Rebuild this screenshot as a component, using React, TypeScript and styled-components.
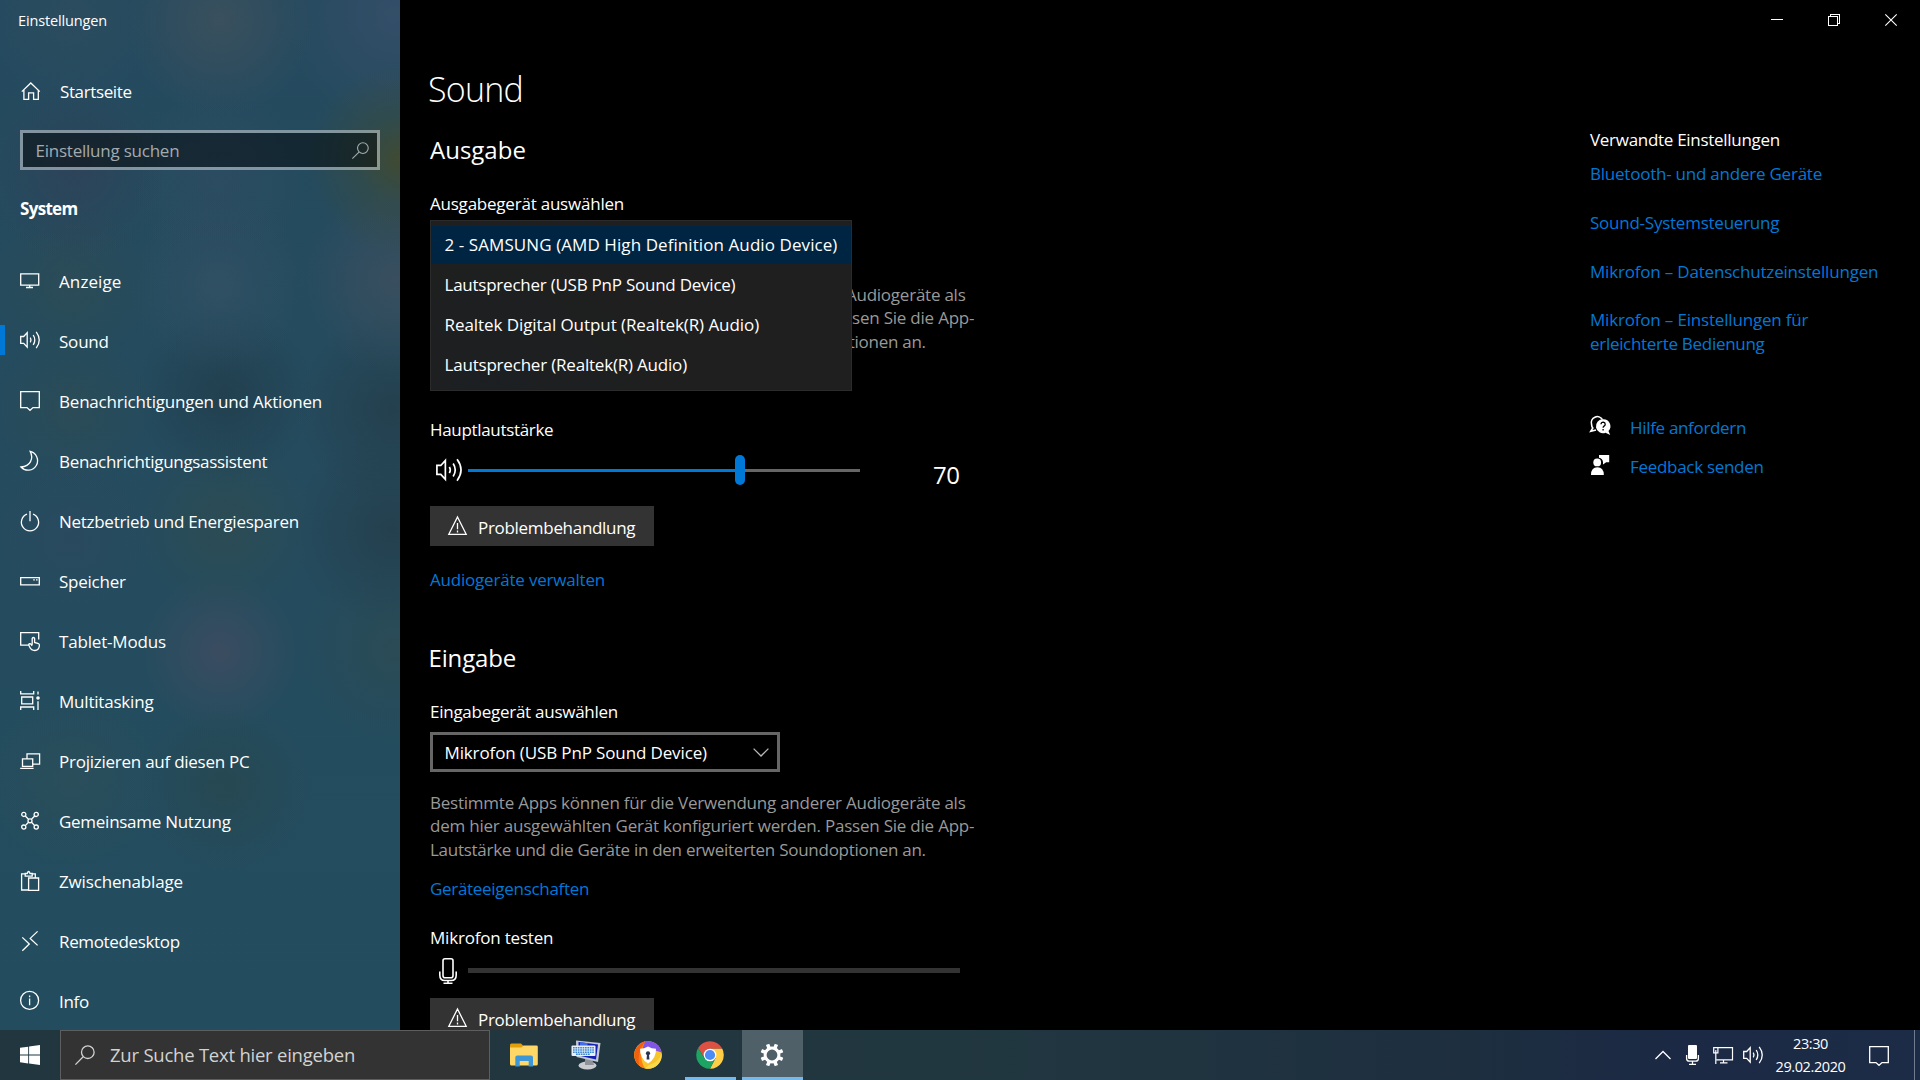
import React from "react";
import styled, { createGlobalStyle } from "styled-components";

const Global = createGlobalStyle`
  *, *::before, *::after { box-sizing: border-box; }
  body { margin: 0; background: #000; overflow: hidden; font-family: "Open Sans", "Noto Sans", sans-serif; color: #fff; }
  svg { display: block; flex: none; overflow: visible; }
`;

/* ---------- shell ---------- */

const Desktop = styled.div`
  width: 1920px;
  height: 1080px;
  display: grid;
  grid-template-rows: 1030px 50px;
  overflow: hidden;
`;

const Window = styled.div`
  display: grid;
  grid-template-columns: 400px 1fr;
  overflow: hidden;
  background: #000;
`;

const Label = styled.span<{ $track?: number }>`
  display: block;
  height: 24px;
  padding-top: 1px;
  font-size: 17px;
  line-height: 24px;
  letter-spacing: ${(p) => p.$track ?? -0.2}px;
  white-space: nowrap;
`;

/* ---------- sidebar ---------- */

const Sidebar = styled.aside`
  display: flex;
  flex-direction: column;
  background:
    radial-gradient(circle 95px at 400px 160px, rgba(74, 74, 36, 0.75), rgba(74, 74, 36, 0.3) 45%, transparent),
    radial-gradient(circle 95px at 220px 20px, rgba(72, 84, 92, 0.6), transparent),
    radial-gradient(circle 110px at 395px 15px, rgba(58, 80, 108, 0.7), transparent),
    radial-gradient(circle 90px at 75px 170px, rgba(52, 62, 84, 0.55), transparent),
    radial-gradient(circle 90px at 218px 180px, rgba(50, 78, 98, 0.55), transparent),
    radial-gradient(circle 85px at 72px 20px, rgba(50, 78, 94, 0.5), transparent),
    radial-gradient(circle 85px at 70px 285px, rgba(50, 76, 78, 0.5), transparent),
    radial-gradient(circle 90px at 218px 285px, rgba(56, 82, 102, 0.6), transparent),
    radial-gradient(circle 95px at 395px 280px, rgba(66, 80, 94, 0.7), transparent),
    radial-gradient(circle 80px at 72px 410px, rgba(52, 76, 78, 0.45), transparent),
    radial-gradient(circle 90px at 225px 395px, rgba(33, 60, 74, 0.75), transparent),
    radial-gradient(circle 95px at 392px 410px, rgba(36, 60, 72, 0.75), transparent),
    radial-gradient(circle 90px at 225px 525px, rgba(50, 76, 76, 0.6), transparent),
    radial-gradient(circle 100px at 392px 530px, rgba(36, 60, 72, 0.75), transparent),
    radial-gradient(circle 85px at 72px 540px, rgba(48, 72, 94, 0.45), transparent),
    radial-gradient(circle 80px at 220px 652px, rgba(72, 76, 98, 0.65), transparent),
    radial-gradient(circle 95px at 395px 650px, rgba(48, 74, 80, 0.6), transparent),
    radial-gradient(circle 85px at 72px 780px, rgba(50, 80, 86, 0.5), transparent),
    radial-gradient(circle 85px at 225px 785px, rgba(40, 70, 76, 0.7), transparent),
    linear-gradient(#254a5f, #244c5e 60%, #234d5e);
`;

const WindowTitle = styled.div`
  height: 40px;
  padding: 9px 0 0 18px;
  font-size: 14.5px;
  line-height: 24px;
  letter-spacing: -0.15px;
`;

const HomeLink = styled.div`
  display: flex;
  align-items: center;
  gap: 18px;
  height: 60px;
  margin-top: 21px;
  padding: 0 0 0 20px;
`;

const SearchField = styled.div`
  display: flex;
  align-items: center;
  justify-content: space-between;
  width: 360px;
  height: 40px;
  margin: 9px 0 0 20px;
  padding: 1px 8px 0 12.5px;
  border: 3px solid rgba(255, 255, 255, 0.42);
  background: rgba(0, 0, 0, 0.46);
  background-clip: padding-box;
  color: #a3abaf;
  ${Label} { padding-top: 0; }
`;

const GroupTitle = styled.h2`
  margin: 27px 0 0 20px;
  font-size: 17px;
  line-height: 24px;
  font-weight: 700;
  letter-spacing: -0.7px;
`;

const NavList = styled.nav`
  margin-top: auto;
`;

const NavItem = styled.div<{ $active?: boolean }>`
  display: flex;
  align-items: center;
  gap: 19px;
  height: 60px;
  padding-left: 15px;
  border-left: 5px solid transparent;
  border-image: linear-gradient(
      transparent 15px,
      ${(p) => (p.$active ? "#0078d7" : "transparent")} 15px,
      ${(p) => (p.$active ? "#0078d7" : "transparent")} 45px,
      transparent 45px
    )
    0 0 0 1;
  ${Label} { padding-top: 1.5px; }
`;

const Glyph = styled.svg.attrs({ fill: "none", stroke: "currentColor", strokeWidth: 1.3 })``;

/* ---------- main pane ---------- */

const Main = styled.main`
  display: grid;
  grid-template-rows: 40px 990px;
  min-width: 0;
`;

const Caption = styled.div`
  display: flex;
  justify-content: flex-end;
  padding-right: 1px;
`;

const CaptionButton = styled.div`
  display: flex;
  align-items: center;
  justify-content: center;
  width: 57px;
  height: 40px;
`;

const Body = styled.div`
  display: grid;
  grid-template-columns: 1190px 1fr;
`;

const Content = styled.section`
  padding: 27px 0 0 30px;
  width: 620px;
`;

const PageTitle = styled.h1`
  margin: 0 0 0 -2px;
  font-size: 34px;
  line-height: 44px;
  font-weight: 350;
  letter-spacing: -0.8px;
`;

const SectionTitle = styled.h2<{ $gap: number; $track?: number; $shift?: number }>`
  margin: ${(p) => p.$gap}px 0 25px ${(p) => p.$shift ?? 0}px;
  font-size: 24px;
  line-height: 32px;
  font-weight: 400;
  letter-spacing: ${(p) => p.$track ?? 0}px;
`;

const SelectWrap = styled.div`
  position: relative;
  margin-top: 5px;
  height: 40px;
`;

const SelectBox = styled.div`
  display: flex;
  align-items: center;
  justify-content: space-between;
  width: 350px;
  height: 40px;
  margin-top: 9px;
  padding: 1px 8px 0 11.5px;
  border: 3px solid #666;
  ${Label} { padding-top: 0; }
`;

const Popup = styled.ul`
  position: absolute;
  z-index: 2;
  left: 0;
  top: 0;
  width: 422px;
  height: 171px;
  margin: 0;
  padding: 5px 0 0;
  list-style: none;
  border: 1px solid #2b2b2b;
  background: radial-gradient(circle 160px at 60px 190px, #1c1f23, #1f1f1f);
`;

const Option = styled.li<{ $selected?: boolean }>`
  height: 40px;
  padding: 6px 0 0 13.5px;
  background: ${(p) => (p.$selected ? "linear-gradient(#002542, #002542) 0 0 / 100% 38px no-repeat" : "none")};
`;

const Hint = styled.p<{ $gap: number }>`
  margin: ${(p) => p.$gap}px 0 0;
  color: #999;
  ${Label} { height: 23.5px; padding-top: 0; line-height: 23.5px; }
`;

const Field = styled.div<{ $gap: number }>`
  margin-top: ${(p) => p.$gap}px;
`;

const Link = styled.a<{ $gap?: number }>`
  display: block;
  margin-top: ${(p) => p.$gap ?? 0}px;
  color: #0078d7;
`;

const VolumeRow = styled.div`
  display: flex;
  align-items: center;
  height: 40px;
  margin-top: 9px;
  padding-left: 6px;
`;

const Track = styled.div`
  display: flex;
  align-items: center;
  width: 392px;
  margin-left: 6px;
`;

const TrackFill = styled.div`
  width: 267px;
  height: 3px;
  background: #0078d7;
`;

const Thumb = styled.div`
  width: 10px;
  height: 30px;
  border-radius: 5px;
  background: #0078d7;
`;

const TrackRest = styled.div`
  flex: 1;
  height: 3px;
  background: #666;
`;

const VolumeValue = styled.div`
  margin-left: 73px;
  padding-top: 9px;
  font-size: 24px;
  line-height: 32px;
  letter-spacing: -0.4px;
`;

const Button = styled.div<{ $gap: number }>`
  display: flex;
  align-items: center;
  gap: 11px;
  width: 224px;
  height: 40px;
  margin-top: ${(p) => p.$gap}px;
  padding-left: 17px;
  background: #333;
  ${Label} { padding-top: 2px; }
`;

const MicRow = styled.div`
  display: flex;
  align-items: center;
  gap: 10px;
  height: 26px;
  margin-top: 9px;
  padding-left: 8px;
`;

const LevelBar = styled.div`
  width: 492px;
  height: 5px;
  margin-top: -1px;
  background: #333;
`;

const Related = styled.aside`
  padding-top: 87px;
`;

const HelpRow = styled.div<{ $gap: number }>`
  display: flex;
  align-items: center;
  gap: 19px;
  height: 24px;
  margin-top: ${(p) => p.$gap}px;
  color: #0078d7;
  svg { margin-top: -2px; }
`;

/* ---------- taskbar ---------- */

const Taskbar = styled.footer`
  display: flex;
  background: linear-gradient(90deg, #21363f, #21373f 50%, #1e2f3f 75%, #1b2944 87%, #1c2b46);
`;

const StartButton = styled.div`
  display: flex;
  align-items: center;
  justify-content: center;
  width: 60px;
`;

const TaskSearch = styled.div`
  display: flex;
  align-items: center;
  gap: 15px;
  width: 430px;
  padding-left: 14px;
  border: 1px solid #5e5e5e;
  background: #333;
  color: #d2d2d2;
  font-size: 18.5px;
  line-height: 26px;
  letter-spacing: -0.23px;
  white-space: nowrap;
`;

const Apps = styled.div`
  display: flex;
  gap: 1px;
  padding-left: 4px;
`;

const AppTile = styled.div<{ $state?: "open" | "focused" }>`
  display: flex;
  align-items: center;
  justify-content: center;
  width: 61px;
  height: 50px;
  padding-right: 2px;
  background:
    linear-gradient(#76b9ed, #76b9ed) 50% 100% / ${(p) => (p.$state === "focused" ? "100%" : p.$state ? "51px" : "0")} 3px no-repeat,
    ${(p) => (p.$state === "focused" ? "#4f6069" : "transparent")};
`;

const Tray = styled.div`
  display: flex;
  align-items: center;
  margin-left: auto;
`;

const Clock = styled.time`
  display: block;
  width: 90px;
  margin: 0 13.500px 0 2.500px;
  font-size: 14.5px;
  line-height: 23px;
  letter-spacing: -0.4px;
  text-align: center;
`;

const PeekEdge = styled.div`
  width: 6px;
  height: 50px;
  margin-left: 25px;
  border-left: 1px solid #6f7a8c;
`;

/* ---------- icons ---------- */

const Speaker = ({ size = 20, w = 1.3 }: { size?: number; w?: number }) => (
  <Glyph width={size} height={size} viewBox="0 0 20 20" strokeWidth={w}>
    <path d="M.7 6.5h3L7.2 2.6v14.6L3.7 13.4h-3z" />
    <path d="M10.3 7.6q1.4 2.4 0 4.8M13.2 5q3.2 4.9 0 10M16.2 1.8q6.1 8.2 0 16.4" />
  </Glyph>
);

const Magnifier = ({ size }: { size: number }) => (
  <Glyph width={size} height={size} viewBox="0 0 20 20" strokeWidth={20 / size + 0.2}>
    <circle cx="12.8" cy="7.2" r="6.3" />
    <path d="M8.2 11.8.4 19.6" />
  </Glyph>
);

const Warning = () => (
  <Glyph width={20} height={20} viewBox="0 0 20 20">
    <path d="M10.5 1 19.2 18.3H1.800zM10.500 7v6.200M10.500 14.600v1.800" />
  </Glyph>
);

const Notification = () => (
  <Glyph width={20} height={20} viewBox="0 0 20 20">
    <path d="M.7 1.6h18.6v16H13L10 20.3 7 17.6H.7z" />
  </Glyph>
);

const navIcons: Record<string, React.ReactNode> = {
  display: <path d="M.7 3.900h18v11.300H.7zM9.700 15.200v2.300M6 17.500h7" />,
  focus: <path d="M10.200 1.400A9.500 9.500 0 1 1 1 17C10.500 16.500 13.800 8.500 10.200 1.400z" />,
  power: <path d="M7 4.200a8.600 8.600 0 1 0 6 0M10 1v10.300" />,
  storage: <path d="M.7 7.700h18.600v7.200H.7zM13.200 9.900h1.600M16 9.900h1.600" />,
  tablet: (
    <path d="M9 15.2H.7V2.6h18v7M12.2 14.8V8.3q1.2-1.6 2.4 0v4.2l3.8 1q1.2.5 1 2.3-.5 4.6-4.6 4.7-3.6 0-5-3.2l-1.200-2.600q.6-1.400 2-.8l1.600 1.800" />
  ),
  multitask: (
    <>
      <path d="M.7.9v3h13v-3M1.7 7h11v6.800h-11zM.7 20v-3h13v3M18 1.400v3M18 11.200V20" />
      <circle cx="18" cy="8" r="1.800" fill="currentColor" stroke="none" />
    </>
  ),
  project: <path d="M7 8.500V3.800h12.600v10.400h-6.800M2.500 8.800h10.200v7.600H2.500zM.2 18.300h13.400" />,
  share: (
    <>
      <circle cx="3.800" cy="4.400" r="2.100" /><circle cx="16.200" cy="4.400" r="2.100" />
      <circle cx="3.800" cy="17.100" r="2.100" /><circle cx="16.200" cy="17.100" r="2.100" />
      <circle cx="10" cy="10.800" r="2" />
      <path d="m5.300 6 3.200 3.300M14.700 6l-3.200 3.300M5.300 15.600l3.200-3.300M14.700 15.600l-3.200-3.300" />
    </>
  ),
  clipboard: <path d="M8 20H1.600V3.800h3.600M12 3.800h3.300v3.600M5.200 6.200V3.500h2q1.400-4 2.800 0h2.200v2.700zM8.600 8h10v12.300h-10z" />,
  remote: <path d="m17.600 1.400-7.400 7 7.400 7M2.300 7.400l7 6.600-7 6.800" />,
  info: <><circle cx="9.600" cy="10.400" r="9" /><path d="M9.600 8.600v6.600M9.600 5.600v1.600" /></>,
};

const NavIcon = ({ name }: { name: string }) => {
  if (name === "sound") return <Speaker />;
  if (name === "notify") return <Notification />;
  return <Glyph width={20} height={20} viewBox="0 0 20 20">{navIcons[name]}</Glyph>;
};

const nav: { icon: string; text: string; track: number; active?: boolean }[] = [
  { icon: "display", text: "Anzeige", track: 0.1 },
  { icon: "sound", text: "Sound", track: -0.2, active: true },
  { icon: "notify", text: "Benachrichtigungen und Aktionen", track: -0.2 },
  { icon: "focus", text: "Benachrichtigungsassistent", track: -0.32 },
  { icon: "power", text: "Netzbetrieb und Energiesparen", track: -0.28 },
  { icon: "storage", text: "Speicher", track: -0.25 },
  { icon: "tablet", text: "Tablet-Modus", track: -0.18 },
  { icon: "multitask", text: "Multitasking", track: -0.2 },
  { icon: "project", text: "Projizieren auf diesen PC", track: -0.25 },
  { icon: "share", text: "Gemeinsame Nutzung", track: -0.27 },
  { icon: "clipboard", text: "Zwischenablage", track: -0.16 },
  { icon: "remote", text: "Remotedesktop", track: -0.35 },
  { icon: "info", text: "Info", track: -0.28 },
];

const outputs = [
  { text: "2 - SAMSUNG (AMD High Definition Audio Device)", track: 0.08 },
  { text: "Lautsprecher (USB PnP Sound Device)", track: -0.24 },
  { text: "Realtek Digital Output (Realtek(R) Audio)", track: -0.07 },
  { text: "Lautsprecher (Realtek(R) Audio)", track: -0.2 },
];

const DeviceHint = ({ gap }: { gap: number }) => (
  <Hint $gap={gap}>
    <Label $track={-0.235}>Bestimmte Apps können für die Verwendung anderer Audiogeräte als</Label>
    <Label $track={-0.215}>dem hier ausgewählten Gerät konfiguriert werden. Passen Sie die App-</Label>
    <Label $track={-0.27}>Lautstärke und die Geräte in den erweiterten Soundoptionen an.</Label>
  </Hint>
);

const Troubleshoot = ({ gap }: { gap: number }) => (
  <Button $gap={gap}>
    <Warning />
    <Label $track={-0.3}>Problembehandlung</Label>
  </Button>
);

const FolderIcon = () => (
  <svg width="28" height="24" viewBox="0 0 28 24">
    <path d="M0 2q0-1.500 1.500-1.500H11L14 3.500V8H0z" fill="#e19f09" />
    <path d="M0 4.500h11.500l2-2H26.500q1.300 0 1.300 1.300V21q0 1.500-1.500 1.500H1.500Q0 22.500 0 21z" fill="#ffd766" />
    <path d="M5.300 23.500V14.500q0-2 2-2H21q2 0 2 2V23.500H18.700V18H9.700V23.500z" fill="#3d96d6" />
  </svg>
);

const KeyboardPcIcon = () => (
  <svg width="30" height="30" viewBox="0 0 30 30">
    <ellipse cx="16.500" cy="25.500" rx="9" ry="4" fill="#c9cbd0" />
    <path d="M14 19h7l2 6h-9z" fill="#8f9298" />
    <path d="M5 .500 29.500 3 27 22 5.500 17z" fill="#c4c8d2" />
    <path d="M7.500 2 27 4.600 25 19.500 7.500 15.600z" fill="#1420b4" />
    <path d="m9 2.200 8 1-4 12.500-4-.8z" fill="#3f6df0" />
    <rect x=".500" y="5.500" width="24" height="10.500" rx="1" fill="#e6f0fa" />
    <path d="M2 7.700h21M2 10h21M2 12.200h21M5 14.300h14" stroke="#3d86d0" strokeWidth="1.400" strokeDasharray="1.700 .700" />
  </svg>
);

const ShieldBrowserIcon = () => (
  <svg width="28" height="28" viewBox="0 0 28 28">
    <circle cx="14" cy="14" r="13.800" fill="#f7c52a" />
    <path d="M14 14 4.200 4.200A13.800 13.800 0 0 1 27.500 11.500L20 9z" fill="#8156e6" />
    <path d="M11 .6A13.800 13.800 0 0 0 11 27.500Q6 20 8 12 9 5 11 .6z" fill="#ff7d12" />
    <path d="M5 3.700A13.800 13.800 0 0 0 5 24.300Q3 12 11 .6 8 1 5 3.700z" fill="#f2600e" />
    <path d="M27.500 11.500Q26 21 15 24l-4 3.500A13.800 13.800 0 0 0 27.500 11.500z" fill="#fbd84c" />
    <path d="M14 5.500q3.500 2.200 8 2.200.3 9.800-8 14.800-8.300-5-8-14.800 4.500 0 8-2.200z" fill="#fff" />
    <circle cx="14" cy="12.300" r="2.100" fill="#2a3350" />
    <path d="M13 13h2l.4 5.500h-2.800z" fill="#2a3350" />
  </svg>
);

const ChromeIcon = () => (
  <svg width="28" height="28" viewBox="0 0 28 28">
    <path d="M2.050 7.100A13.800 13.800 0 0 1 25.950 7.100L26 7.700H14L8.540 17.150z" fill="#dd5144" />
    <path d="M25.950 7.100A13.800 13.800 0 0 1 14 27.800L19.460 17.150 14 7.700H26.200z" fill="#ffcd46" />
    <path d="M14 27.800A13.800 13.800 0 0 1 2.050 7.100L8.540 17.150 14 20.300 19.460 17.150z" fill="#1da462" />
    <circle cx="14" cy="14" r="6.300" fill="#fff" />
    <circle cx="14" cy="14" r="5.100" fill="#4c8bf5" />
  </svg>
);

const GearIcon = () => (
  <svg width="24" height="24" viewBox="-12 -12 24 24">
    <circle r="6.900" fill="none" stroke="#fff" strokeWidth="3" />
    {[22.5, 67.5, 112.5, 157.5, 202.5, 247.5, 292.5, 337.5].map((a) => (
      <rect key={a} x="-1.800" y="-11.500" width="3.600" height="4.500" rx=".5" fill="#fff" transform={`rotate(${a})`} />
    ))}
  </svg>
);

/* ---------- page ---------- */

export default function App() {
  return (
    <Desktop>
      <Global />
      <Window>
        <Sidebar>
          <WindowTitle>Einstellungen</WindowTitle>
          <HomeLink>
            <Glyph width={22} height={20} viewBox="0 0 22 20">
              <path d="M1.800 10.600 10.800 2l9 8.600M3.900 8.800v9.600h4.700v-6.600h5v6.600h4.700V8.800" />
            </Glyph>
            <Label $track={-0.38}>Startseite</Label>
          </HomeLink>
          <SearchField>
            <Label $track={-0.23}>Einstellung suchen</Label>
            <Magnifier size={17} />
          </SearchField>
          <GroupTitle>System</GroupTitle>
          <NavList>
            {nav.map((n) => (
              <NavItem key={n.text} $active={n.active}>
                <NavIcon name={n.icon} />
                <Label $track={n.track}>{n.text}</Label>
              </NavItem>
            ))}
          </NavList>
        </Sidebar>

        <Main>
          <Caption>
            <CaptionButton>
              <Glyph width={12} height={12} viewBox="0 0 12 12" shapeRendering="crispEdges"><path d="M0 5.500h12" strokeWidth={1} /></Glyph>
            </CaptionButton>
            <CaptionButton>
              <Glyph width={12} height={12} viewBox="0 0 12 12" shapeRendering="crispEdges"><path d="M.5 2.500h9v9h-9zM2.500 2.500v-2h9v9h-2" strokeWidth={1} /></Glyph>
            </CaptionButton>
            <CaptionButton>
              <Glyph width={12} height={12} viewBox="0 0 12 12"><path d="m.3.3 11.400 11.400M11.700.3.3 11.700" strokeWidth={1.100} /></Glyph>
            </CaptionButton>
          </Caption>
          <Body>
            <Content>
              <PageTitle>Sound</PageTitle>
              <SectionTitle $gap={23} $track={0}>Ausgabe</SectionTitle>
              <Label $track={-0.22}>Ausgabegerät auswählen</Label>
              <SelectWrap>
                <Popup>
                  {outputs.map((o, i) => (
                    <Option key={o.text} $selected={i === 0}>
                      <Label $track={o.track}>{o.text}</Label>
                    </Option>
                  ))}
                </Popup>
              </SelectWrap>
              <DeviceHint gap={22.5} />
              <Field $gap={64}>
                <Label $track={-0.32}>Hauptlautstärke</Label>
                <VolumeRow>
                  <Speaker size={26} w={1.1} />
                  <Track>
                    <TrackFill />
                    <Thumb />
                    <TrackRest />
                  </Track>
                  <VolumeValue>70</VolumeValue>
                </VolumeRow>
              </Field>
              <Troubleshoot gap={16} />
              <Link $gap={21}><Label>Audiogeräte verwalten</Label></Link>
              <SectionTitle $gap={51} $track={-0.15} $shift={-1.5}>Eingabe</SectionTitle>
              <Label $track={-0.26}>Eingabegerät auswählen</Label>
              <SelectBox>
                <Label $track={-0.13}>Mikrofon (USB PnP Sound Device)</Label>
                <Glyph width={16} height={9} viewBox="0 0 16 9"><path d="m.6.600 7.400 7.400L15.400.600" stroke="#b8b8b8" /></Glyph>
              </SelectBox>
              <DeviceHint gap={18.5} />
              <Link $gap={15}><Label $track={-0.3}>Geräteeigenschaften</Label></Link>
              <Field $gap={25}>
                <Label $track={-0.2}>Mikrofon testen</Label>
                <MicRow>
                  <Glyph width={20} height={26} viewBox="0 0 20 26">
                    <rect x="5" y=".8" width="10" height="19" rx="2" strokeWidth="1.600" />
                    <path d="M1.800 13.500v3.500q0 5.500 5 5.500h6.400q5 0 5-5.500v-3.500M10 22.500v2.500M5.500 25.200h9" strokeWidth="1.600" />
                  </Glyph>
                  <LevelBar />
                </MicRow>
              </Field>
              <Troubleshoot gap={14} />
            </Content>

            <Related>
              <Label $track={-0.29}>Verwandte Einstellungen</Label>
              <Link $gap={9.5}><Label $track={-0.23}>Bluetooth- und andere Geräte</Label></Link>
              <Link $gap={25.5}><Label $track={-0.24}>Sound-Systemsteuerung</Label></Link>
              <Link $gap={25}><Label $track={-0.19}>Mikrofon – Datenschutzeinstellungen</Label></Link>
              <Link $gap={24}>
                <Label $track={-0.18}>Mikrofon – Einstellungen für</Label>
                <Label $track={-0.3}>erleichterte Bedienung</Label>
              </Link>
              <HelpRow $gap={60}>
                <svg width="21" height="20" viewBox="0 0 21 20">
                  <path d="M12.500 3.600A6 6 0 0 0 1.600 8.400q0 2 1.200 3.600L.8 15.300 6 14" fill="none" stroke="#fff" strokeWidth="1.600" />
                  <path d="M13 3.200a7 7 0 1 0 2.500 13.500L20.200 19l-1.700-4A7 7 0 0 0 13 3.200z" fill="#fff" />
                  <path d="M11 8.200q.2-2 2.200-2 2 .2 2 2 0 1.200-1.200 1.900-.9.600-.9 1.600M13.100 12.900v1.500" fill="none" stroke="#000" strokeWidth="1.300" />
                </svg>
                <Label $track={-0.32}>Hilfe anfordern</Label>
              </HelpRow>
              <HelpRow $gap={15}>
                <svg width="21" height="20" viewBox="0 0 21 20">
                  <path d="M9 0h10.200v7.300h-3L13 9.600V7.300q-.3-4-4-4.600z" fill="#fff" />
                  <circle cx="7.200" cy="7.400" r="3.900" fill="#fff" />
                  <path d="M1 20q0-7.700 6.400-7.700T13.800 20z" fill="#fff" />
                </svg>
                <Label $track={-0.3}>Feedback senden</Label>
              </HelpRow>
            </Related>
          </Body>
        </Main>
      </Window>

      <Taskbar>
        <StartButton>
          <svg width="20" height="20" viewBox="0 0 20 20" fill="#fff">
            <path d="M0 2.800 8.200 1.700v7.900H0zM9.100 1.500 20 0v9.600H9.100zM0 10.500h8.200v7.900L0 17.300zM9.100 10.500H20V20L9.100 18.500z" />
          </svg>
        </StartButton>
        <TaskSearch>
          <Magnifier size={20} />
          Zur Suche Text hier eingeben
        </TaskSearch>
        <Apps>
          <AppTile><FolderIcon /></AppTile>
          <AppTile><KeyboardPcIcon /></AppTile>
          <AppTile><ShieldBrowserIcon /></AppTile>
          <AppTile $state="open"><ChromeIcon /></AppTile>
          <AppTile $state="focused"><GearIcon /></AppTile>
        </Apps>
        <Tray>
          <Glyph width={31} height={20} viewBox="0 0 31 20"><path d="m.5 14 7.500-7.500 7.500 7.500" /></Glyph>
          <Glyph width={27} height={20} viewBox="0 0 27 20">
            <rect x="2" y="0" width="9" height="14" rx="1" fill="#fff" stroke="none" />
            <path d="M.6 10v3.500q0 2.700 2.700 2.700h6.400q2.700 0 2.700-2.700V10M6.500 16v3.400M3 19.400h7" />
          </Glyph>
          <Glyph width={30} height={20} viewBox="0 0 30 20">
            <path d="M5.500 2.600h14v12.300h-16M10.500 15v2.800M7 17.900h7.500M.7 2.600h4.200v5.300H.7zM2.800 5v14" strokeWidth={1.200} />
          </Glyph>
          <Speaker />
          <Clock>23:30<br />29.02.2020</Clock>
          <Notification />
          <PeekEdge />
        </Tray>
      </Taskbar>
    </Desktop>
  );
}
